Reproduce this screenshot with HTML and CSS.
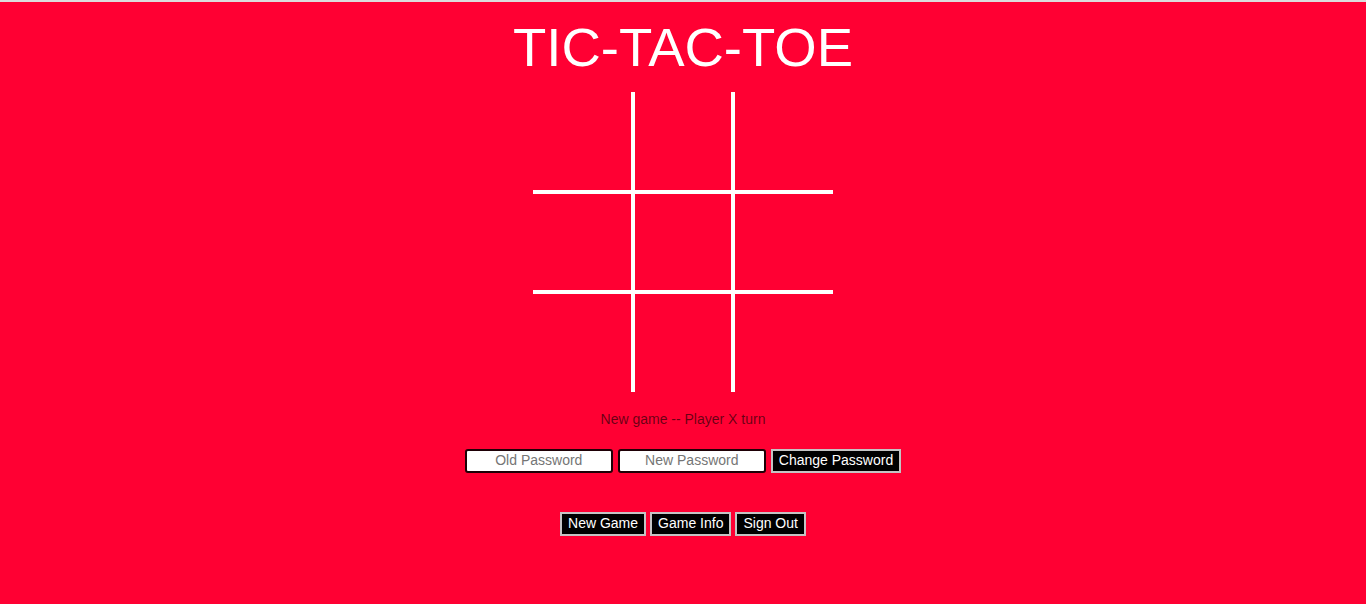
FILE: index.html
```html
<!DOCTYPE html>
<html lang="en">
<head>
<meta charset="utf-8">
<title>Tic-Tac-Toe</title>
<link rel="stylesheet" href="styles.css">
</head>
<body>
<div class="top-strip"></div>
<main class="page">
  <h1 class="title">TIC-TAC-TOE</h1>
  <div class="board">
    <div class="cell c0"></div>
    <div class="cell c1"></div>
    <div class="cell c2"></div>
    <div class="cell c3"></div>
    <div class="cell c4"></div>
    <div class="cell c5"></div>
    <div class="cell c6"></div>
    <div class="cell c7"></div>
    <div class="cell c8"></div>
  </div>
  <p class="status">New game -- Player X turn</p>
  <form class="password-row">
    <input class="field" type="password" placeholder="Old Password">
    <input class="field" type="password" placeholder="New Password">
    <button class="btn" type="button">Change Password</button>
  </form>
  <div class="action-row">
    <button class="btn" type="button">New Game</button>
    <button class="btn" type="button">Game Info</button>
    <button class="btn" type="button">Sign Out</button>
  </div>
</main>
</body>
</html>
```
FILE: styles.css
```css
html {
  background: #ff0033;
}
body {
  margin: 0;
  background: #ff0033;
  font-family: "Liberation Sans", Arial, sans-serif;
  min-height: 604px;
}
.top-strip {
  height: 2px;
  background: #dcdcdc;
}
.page {
  display: flex;
  flex-direction: column;
  align-items: center;
}
.title {
  margin: 15px 0 13px;
  font-size: 54.5px;
  line-height: 62px;
  font-weight: normal;
  color: #fff;
}
.board {
  display: grid;
  grid-template-columns: repeat(3, 100px);
  grid-template-rows: repeat(3, 100px);
  width: 300px;
  height: 300px;
}
.cell {
  box-sizing: border-box;
  border: 0 solid #fff;
}
.c0 { border-right-width: 2px; border-bottom-width: 2px; }
.c1 { border-left-width: 2px; border-right-width: 2px; border-bottom-width: 2px; }
.c2 { border-left-width: 2px; border-bottom-width: 2px; }
.c3 { border-top-width: 2px; border-right-width: 2px; border-bottom-width: 2px; }
.c4 { border-width: 2px; }
.c5 { border-top-width: 2px; border-left-width: 2px; border-bottom-width: 2px; }
.c6 { border-top-width: 2px; border-right-width: 2px; }
.c7 { border-top-width: 2px; border-left-width: 2px; border-right-width: 2px; }
.c8 { border-top-width: 2px; border-left-width: 2px; }
.status {
  margin: 19px 0 0;
  font-size: 14px;
  line-height: 16px;
  color: rgba(0, 0, 0, 0.6);
}
.password-row {
  display: flex;
  gap: 5px;
  margin: 22px 0 0;
}
.field {
  box-sizing: border-box;
  width: 148px;
  height: 24px;
  margin: 0;
  padding: 0 4px 2px;
  border: 2px solid #1e0006;
  border-radius: 3px;
  background: #fff;
  font-family: "Liberation Sans", Arial, sans-serif;
  font-size: 14px;
  text-align: center;
  color: #000;
}
.field::placeholder {
  color: #757575;
}
.btn {
  box-sizing: border-box;
  height: 24px;
  margin: 0;
  padding: 0 6px 2px;
  border: 2px solid #c4c4c4;
  border-radius: 0;
  background: #000;
  color: #fff;
  font-family: "Liberation Sans", Arial, sans-serif;
  font-size: 14px;
  line-height: 16px;
}
.action-row {
  display: flex;
  gap: 4px;
  margin-top: 39px;
}
```
